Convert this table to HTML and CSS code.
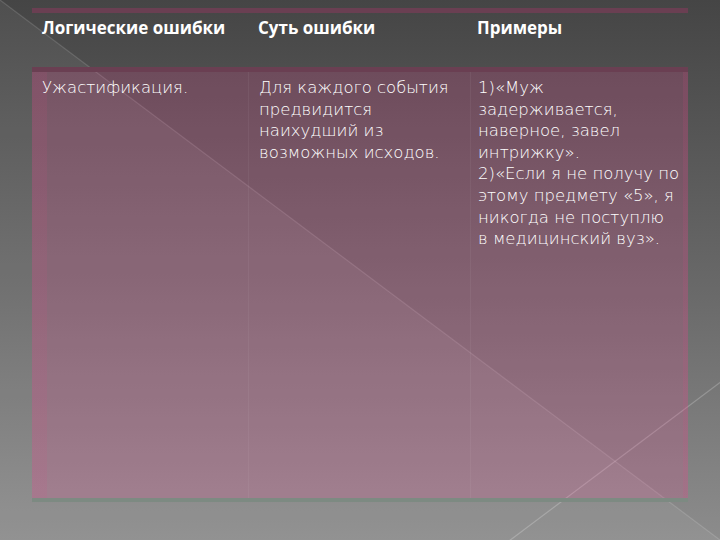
FILE: index.html
```html
<!DOCTYPE html>
<html lang="ru">
<head>
<meta charset="utf-8">
<title>Логические ошибки</title>
<link rel="stylesheet" href="styles.css">
</head>
<body>
<div class="slide">
  <svg class="deco" width="720" height="540" viewBox="0 0 720 540" aria-hidden="true">
    <polygon points="0,0 720,540 0,540" fill="#ffffff" fill-opacity="0.06"/>
    <line x1="0" y1="0" x2="720" y2="540" stroke="#ffffff" stroke-opacity="0.14" stroke-width="1.2"/>
    <line x1="505" y1="544" x2="730" y2="375" stroke="#ffffff" stroke-opacity="0.22" stroke-width="1.2"/>
  </svg>
  <div class="tbl">
    <div class="row head">
      <div class="cell c1">Логические ошибки</div>
      <div class="cell c2">Суть ошибки</div>
      <div class="cell c3">Примеры</div>
    </div>
    <div class="row body">
      <div class="cell c1">Ужастификация.</div>
      <div class="cell c2">Для каждого события<br>предвидится<br>наихудший из<br>возможных исходов.</div>
      <div class="cell c3">1)«Муж<br>задерживается,<br>наверное, завел<br>интрижку».<br>2)«Если я не получу по<br>этому предмету «5», я<br>никогда не поступлю<br>в медицинский вуз».</div>
    </div>
  </div>
</div>
</body>
</html>
```

FILE: styles.css
```css
html, body {
  margin: 0;
  padding: 0;
}
body {
  width: 720px;
  height: 540px;
  overflow: hidden;
  background: #464646;
}
.slide {
  position: relative;
  width: 720px;
  height: 540px;
  background: linear-gradient(to bottom, #454545 0%, #6a6a6a 55%, #8c8c8c 100%);
  font-family: "DejaVu Sans", "Liberation Sans", sans-serif;
  color: #ffffff;
  padding-top: 8px;
  box-sizing: border-box;
}
.deco {
  position: absolute;
  left: 0;
  top: 0;
}
.tbl {
  position: relative;
  margin-left: 32px;
  width: 656px;
}
.row {
  display: grid;
  grid-template-columns: 216px 222px 218px;
}
.head {
  height: 54px;
  border-top: 5px solid #9a5a74;
  border-image: linear-gradient(to bottom, #6a3f52 0 40%, #dba2b6 40% 62%, #9a5a74 62% 100%) 1;
  font-family: "Open Sans", "DejaVu Sans", sans-serif;
  font-weight: bold;
  font-size: 17px;
}
.body {
  height: 426px;
  border-top: 5px solid #9a5a74;
  border-bottom: 4px solid #b06a86;
  border-image: linear-gradient(to bottom, #6a3f52 0 1%, #c98aa2 1% 1.6%, #9a5a74 1.6% 98.8%, #b9768f 98.8% 99.4%, #7d8a82 99.4%) 1;
  background:
    linear-gradient(to right, rgba(220, 70, 130, 0.1) 0 15px, transparent 15px 651px, rgba(220, 70, 130, 0.12) 651px),
    rgba(240, 70, 150, 0.2);
  font-weight: 300;
  font-size: 16.5px;
}
.cell {
  line-height: 21.6px;
  white-space: nowrap;
}
.head .cell {
  padding-top: 4px;
}
.body .cell {
  padding-top: 5px;
}
.c1 {
  padding-left: 10px;
}
.c2 {
  padding-left: 10px;
}
.c3 {
  padding-left: 7px;
}
.body .c2,
.body .c3 {
  border-left: 1px solid rgba(255, 255, 255, 0.05);
}
```
